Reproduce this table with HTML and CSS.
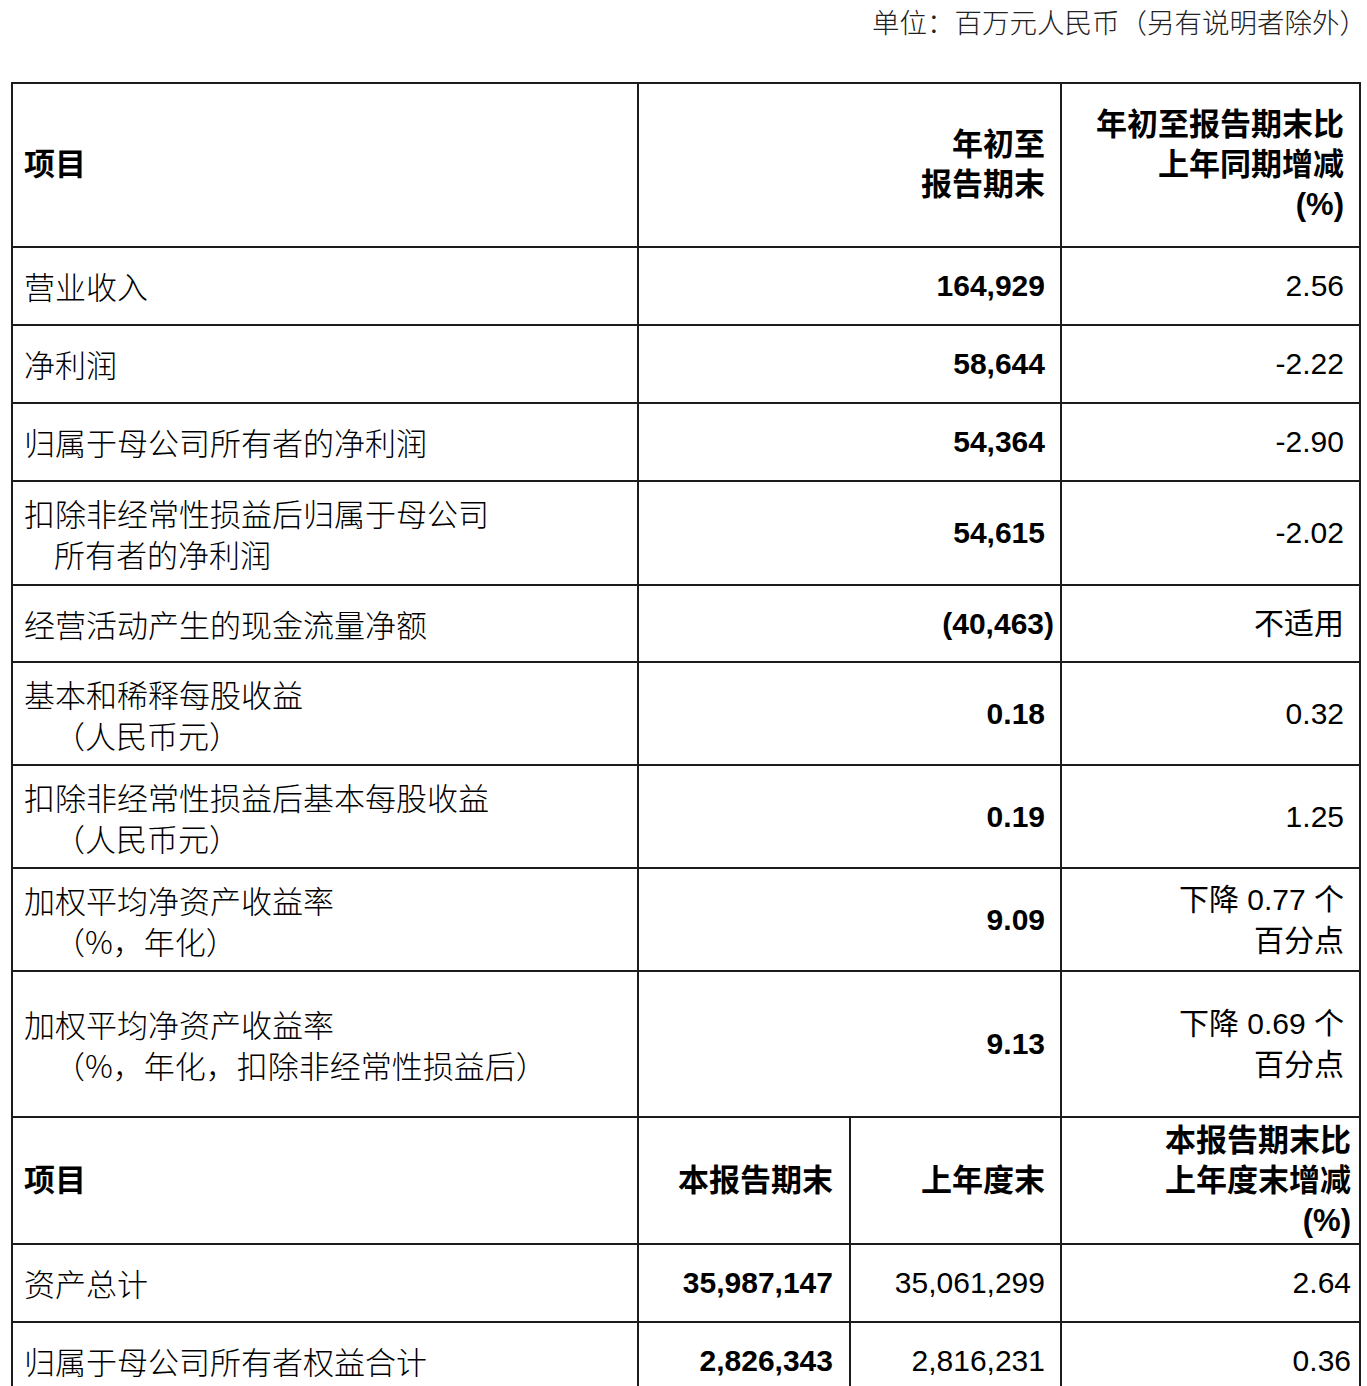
FILE: index.html
```html
<!DOCTYPE html>
<html lang="zh-CN">
<head>
<meta charset="utf-8">
<title>主要财务数据</title>
<link rel="stylesheet" href="styles.css">
</head>
<body>
<div class="page">
  <div class="note">单位：百万元人民币（另有说明者除外）</div>
  <table class="fin">
    <colgroup>
      <col class="c-label">
      <col class="c-a">
      <col class="c-b">
      <col class="c-c">
    </colgroup>
    <tr class="r-head">
      <th class="lbl head">项目</th>
      <th class="num head" colspan="2">年初至<br>报告期末</th>
      <th class="num head">年初至报告期末比<br>上年同期增减<br>(%)</th>
    </tr>
    <tr class="r-1">
      <td class="lbl">营业收入</td>
      <td class="num bold" colspan="2">164,929</td>
      <td class="num">2.56</td>
    </tr>
    <tr class="r-1">
      <td class="lbl">净利润</td>
      <td class="num bold" colspan="2">58,644</td>
      <td class="num">-2.22</td>
    </tr>
    <tr class="r-1">
      <td class="lbl">归属于母公司所有者的净利润</td>
      <td class="num bold" colspan="2">54,364</td>
      <td class="num">-2.90</td>
    </tr>
    <tr class="r-2a">
      <td class="lbl"><span class="line">扣除非经常性损益后归属于母公司</span><span class="line cont">所有者的净利润</span></td>
      <td class="num bold" colspan="2">54,615</td>
      <td class="num">-2.02</td>
    </tr>
    <tr class="r-1b">
      <td class="lbl">经营活动产生的现金流量净额</td>
      <td class="num bold tight" colspan="2">(40,463)</td>
      <td class="num">不适用</td>
    </tr>
    <tr class="r-2">
      <td class="lbl"><span class="line">基本和稀释每股收益</span><span class="line cont">（人民币元）</span></td>
      <td class="num bold" colspan="2">0.18</td>
      <td class="num">0.32</td>
    </tr>
    <tr class="r-2">
      <td class="lbl"><span class="line">扣除非经常性损益后基本每股收益</span><span class="line cont">（人民币元）</span></td>
      <td class="num bold" colspan="2">0.19</td>
      <td class="num">1.25</td>
    </tr>
    <tr class="r-2">
      <td class="lbl"><span class="line">加权平均净资产收益率</span><span class="line cont">（%，年化）</span></td>
      <td class="num bold" colspan="2">9.09</td>
      <td class="num"><span class="line">下降 0.77 个</span><span class="line">百分点</span></td>
    </tr>
    <tr class="r-tall">
      <td class="lbl"><span class="line">加权平均净资产收益率</span><span class="line cont">（%，年化，扣除非经常性损益后）</span></td>
      <td class="num bold" colspan="2">9.13</td>
      <td class="num"><span class="line">下降 0.69 个</span><span class="line">百分点</span></td>
    </tr>
    <tr class="r-head2">
      <th class="lbl head">项目</th>
      <th class="num head wide">本报告期末</th>
      <th class="num head">上年度末</th>
      <th class="num head edge">本报告期末比<br>上年度末增减<br>(%)</th>
    </tr>
    <tr class="r-1">
      <td class="lbl">资产总计</td>
      <td class="num bold wide">35,987,147</td>
      <td class="num">35,061,299</td>
      <td class="num edge">2.64</td>
    </tr>
    <tr class="r-1">
      <td class="lbl">归属于母公司所有者权益合计</td>
      <td class="num bold wide">2,826,343</td>
      <td class="num">2,816,231</td>
      <td class="num edge">0.36</td>
    </tr>
  </table>
</div>
</body>
</html>
```

FILE: styles.css
```css
html, body {
  margin: 0;
  padding: 0;
  background: #ffffff;
}

body {
  font-family: "Liberation Sans", "Noto Sans CJK SC", sans-serif;
  color: #000000;
  overflow: hidden;
}

.page {
  padding: 0 0 0 11px;
}

.note {
  height: 82px;
  box-sizing: border-box;
  padding-top: 3px;
  text-align: right;
  font-size: 27.5px;
  line-height: 36px;
  color: #222222;
  font-family: "Noto Sans CJK SC", sans-serif;
  font-weight: 300;
}

.fin {
  border-collapse: collapse;
  table-layout: fixed;
  width: 1349px;
}

.c-label { width: 626px; }
.c-a { width: 212px; }
.c-b { width: 211px; }
.c-c { width: 299px; }

.fin th,
.fin td {
  border: 2px solid #1c1c1c;
  padding: 0 15px 0 11px;
  vertical-align: middle;
  line-height: 40px;
}

.line {
  display: block;
  height: 41px;
  line-height: 41px;
  overflow: visible;
}

.lbl {
  text-align: left;
  font-size: 31px;
  font-weight: 300;
  font-family: "Noto Sans CJK SC", sans-serif;
}

.cont {
  padding-left: 30px;
}

.num {
  text-align: right;
  font-size: 30px;
  font-weight: 400;
}

.fin .num.head,
.fin .lbl.head {
  font-size: 31px;
  font-weight: 700;
  font-family: "Liberation Sans", "Noto Sans CJK SC", sans-serif;
}

.fin .bold {
  font-weight: 700;
}

.fin .tight {
  padding-right: 6px;
}

.fin .wide {
  padding-right: 16px;
}

.fin .edge {
  padding-right: 8px;
}

.r-head td, .r-head th { height: 162px; }
.r-1 td { height: 76px; }
.r-1b td { height: 75px; }
.r-2a td { height: 102px; }
.r-2 td { height: 101px; }
.r-tall td { height: 144px; }
.r-head2 th { height: 125px; }
```
